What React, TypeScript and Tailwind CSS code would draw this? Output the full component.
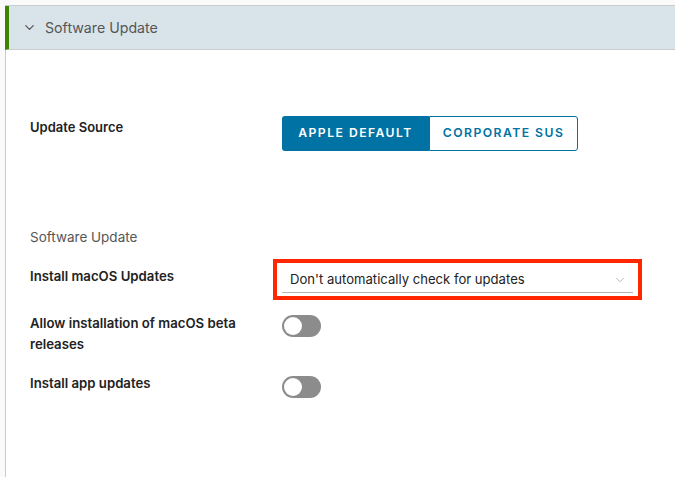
import { ChevronDown } from 'lucide-react'

const font = { fontFamily: '"Inter", "Lato", sans-serif' }

function Toggle() {
  return (
    <div className="w-[39px] h-[22px] rounded-full bg-[#8c8c8c] flex items-center px-[2px]">
      <div className="w-[18px] h-[18px] rounded-full bg-white" />
    </div>
  )
}

export default function App() {
  return (
    <div className="w-[675px] h-[477px] bg-[#fafafa] pt-[5px] overflow-hidden" style={font}>
      <div className="ml-[5px] h-full border-t border-[#cccccc]">
        {/* Header */}
        <div className="h-[44px] bg-[#d9e4ea] border-l-4 border-[#3c8500] border-b border-b-[#cccccc] flex items-center pl-[13px] gap-[8px] text-[#565656]">
          <ChevronDown className="w-[15px] h-[15px]" strokeWidth={2} />
          <span className="text-[14.2px]">Software Update</span>
        </div>

        {/* Body */}
        <div className="h-full bg-white border-l border-[#cccccc] pl-[24px] text-[#222]">
          <div className="flex items-start pt-[66px]">
            <div className="w-[252px] text-[13px] font-semibold pt-[2px]">Update Source</div>
            <div className="flex h-[35px] text-[12.2px] font-semibold tracking-[0.12em] uppercase">
              <div className="w-[147px] bg-[#0072a3] text-white rounded-l-[3px] flex items-center justify-center">
                Apple Default
              </div>
              <div className="w-[149px] border border-[#0072a3] text-[#0072a3] rounded-r-[3px] flex items-center justify-center">
                Corporate SUS
              </div>
            </div>
          </div>

          <div className="mt-[76px] text-[13.5px] text-[#565656]">Software Update</div>

          <div className="flex items-start mt-[12px]">
            <div className="w-[243px] text-[13.2px] font-semibold pt-[8px]">Install macOS Updates</div>
            <div className="w-[369px] h-[41px] border-4 border-[#ff2600] px-[5px] pt-[5px]">
              <div className="flex items-center justify-between border-b border-[#b3b3b3] h-[25px] pl-[8px] pr-[6px]">
                <span className="text-[13.1px] text-[#222]">Don't automatically check for updates</span>
                <ChevronDown className="w-[14px] h-[14px] text-[#9a9a9a]" strokeWidth={1.2} />
              </div>
            </div>
          </div>

          <div className="flex items-start mt-[15px]">
            <div className="w-[252px] text-[13.2px] font-semibold leading-[21px] -mt-[2px]">
              Allow installation of macOS beta
              <br />
              releases
            </div>
            <Toggle />
          </div>

          <div className="flex items-start mt-[21px]">
            <div className="w-[252px] text-[13.2px] font-semibold leading-[21px] -mt-[3px]">Install app updates</div>
            <Toggle />
          </div>
        </div>
      </div>
    </div>
  )
}
